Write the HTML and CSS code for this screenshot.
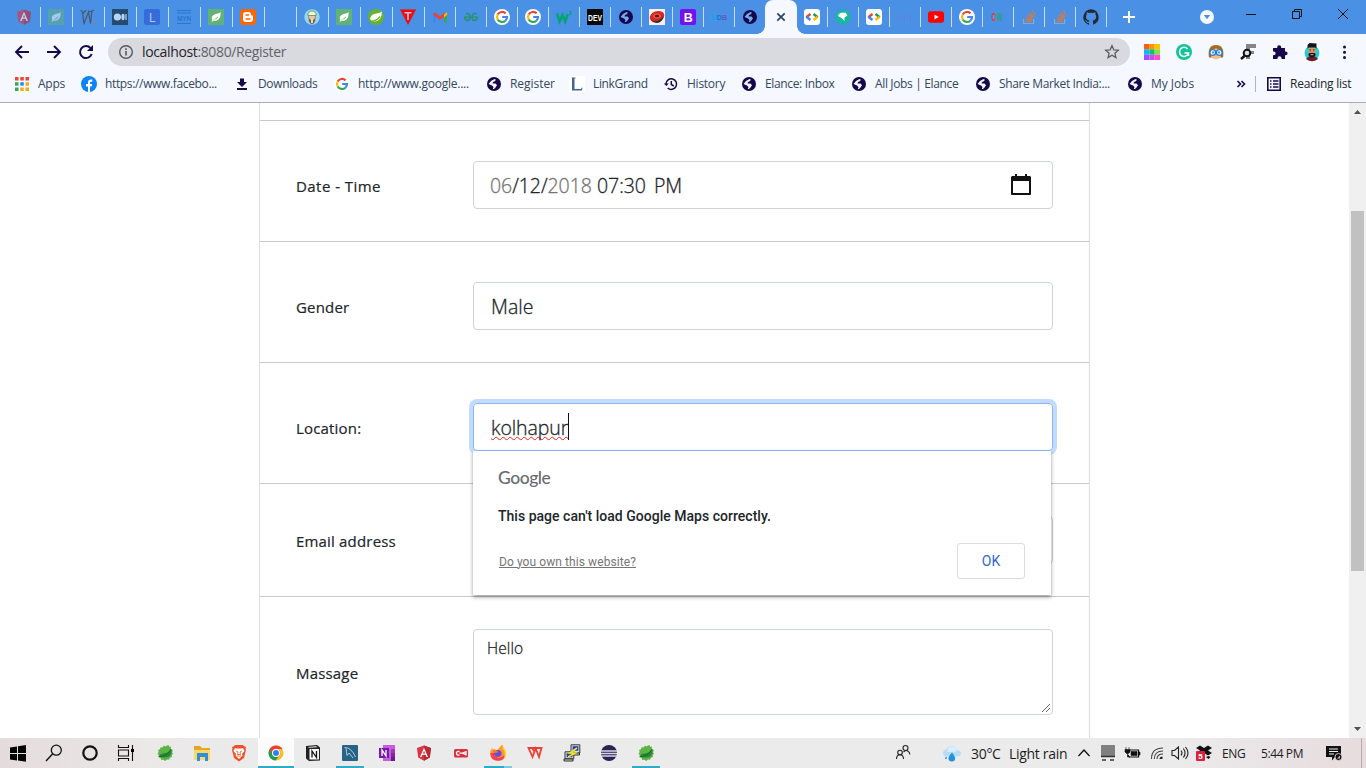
FILE: index.html
```html
<!DOCTYPE html>
<html lang="en">
<head>
<meta charset="utf-8">
<title>Register</title>
<link rel="stylesheet" href="styles.css">
</head>
<body>
<svg class="defs" aria-hidden="true">
  <symbol id="globe" viewBox="0 0 16 16"><circle cx="8" cy="8" r="7" fill="#17084b"/><path d="M2.600 8 5 5 8.500 3 10 3.800 8.800 5.300 7 6 6.500 7.500h3l1.500 1.800L9.500 11.500 8 13H6.800l.7-2L6 9.500z" fill="#f3f6fd"/></symbol>
  <symbol id="globe-tab" viewBox="0 0 16 16"><circle cx="8" cy="8" r="7" fill="#17084b"/><path d="M2.600 8 5 5 8.500 3 10 3.800 8.800 5.300 7 6 6.500 7.500h3l1.500 1.800L9.500 11.500 8 13H6.800l.7-2L6 9.500z" fill="#76adf0"/></symbol>
  <symbol id="google" viewBox="0 0 16 16"><circle cx="8" cy="8" r="8" fill="#fff"/><g fill="none" stroke-width="2.200"><path d="M11.600 4.400A5 5 0 0 0 3.700 5.500" stroke="#ea4335"/><path d="M3.700 5.500a5 5 0 0 0 0 5" stroke="#fbbc05"/><path d="M3.700 10.500a5 5 0 0 0 7.700 1.200" stroke="#34a853"/><path d="M11.400 11.700A5 5 0 0 0 13 8H8.200" stroke="#4285f4"/></g></symbol>
  <symbol id="leaf" viewBox="0 0 16 16"><path d="M0 0h16v16H0z" fill="#60b277"/><path d="M12.600 3C11 5 4.500 4.600 3.800 8.400c-.2 1 .2 1.900.7 2.400l-1 1.400.8.500 1.200-1.300c5 1.200 7.500-2.400 7.100-8.400zM5.500 10.500c2.500-1 4-2.300 5-4-.6 2.800-2.300 4.200-5 4z" fill="#fff"/></symbol>
  <symbol id="angular" viewBox="0 0 16 16"><path d="M8 .5 15 3l-1.200 9.500L8 15.700 2.200 12.500 1 3z" fill="#dd3340"/><path d="M8 .5 15 3l-1.200 9.500L8 15.700z" fill="#b82a39"/><path d="M8 2.700 4 12h1.500l.9-2.200h3.200l.9 2.200H12zm0 3.100 1.100 2.700H6.900z" fill="#fff"/></symbol>
  <symbol id="codelab" viewBox="0 0 16 16"><rect width="16" height="16" rx="3" fill="#fff"/><g fill="none" stroke-width="2.400"><path d="M6.500 5 2.300 8.200" stroke="#ea4335"/><path d="M2.300 7.800 6.500 11" stroke="#4285f4"/><path d="M9.500 5l4.200 3.200" stroke="#0f9d58"/><path d="M13.700 7.800 9.500 11" stroke="#fbbc05"/></g></symbol>
  <symbol id="stack" viewBox="0 0 16 16"><g fill="none" stroke="#93a6bb" stroke-width="1.200"><path d="M2.600 10v4.500h10V10"/></g><g stroke="#df7936" stroke-width="1.200"><path d="M4.700 12.500h6M4.800 10.400l6 .8M5.300 8l5.700 2M6.700 5.500l5 3.500M8.700 3.300l3.800 4.700M11.500 1.300 14 6.500"/></g></symbol>
  <symbol id="spring-leaf" viewBox="0 0 16 16"><circle cx="8" cy="8" r="8" fill="#67b32e"/><path d="M13.800 2.500C12 5 4 3.500 2.400 8.500c-.4 1.500 0 2.300.8 3 4.800 2.500 10.800-.2 10.600-9z" fill="#fff"/><path d="M3 12.300c4-.3 7-2 9-5" fill="none" stroke="#67b32e" stroke-width="1.200"/></symbol>
  <symbol id="sts" viewBox="0 0 18 18"><path d="m11 1.500 1.500-.5 1 2 1.500-.5-.3 2 2.300 2-1 1.500 1 2-1.300 1 .3 2-2 .7-1 2-2-.2-1.700 1.500-2-1.200-2 .3-.7-2-2-.8.3-2-1.400-1.500L2.700 8 2 6l2-.8.5-2 2 .3 1.500-2 1.500 1z" fill="#5db445"/><path d="M3 12C5 8 12 11 15 5c1.500 5-1 8-5 8.500-3 .3-5 0-7-1.500z" fill="#28873a"/><path d="M2.500 12.500C6 13 12 11 15 5" fill="none" stroke="#125b26" stroke-width=".7"/></symbol>
</svg>

<header class="browser">
  <div class="tabstrip">
    <div class="tab first"><svg class="fade" viewBox="0 0 16 16"><use href="#angular"/></svg></div>
    <div class="tab"><svg class="fade teal" viewBox="0 0 16 16"><use href="#leaf"/></svg></div>
    <div class="tab"><svg viewBox="0 0 16 16"><g fill="none" stroke="#48576e" stroke-width="1.200"><path d="M.5 1.500C4 1 2.500 10 4 14.500L8.500 3l2 11.500L12 1.500M2 5 6 1.200M8.500 3 14 1.200"/></g><circle cx="14.500" cy="13" r="1.200" fill="#8d8583"/></svg></div>
    <div class="tab"><svg viewBox="0 0 16 16"><path d="M0 0h16v16H0z" fill="#254a70"/><circle cx="5.400" cy="8" r="3.600" fill="#b7d4f7"/><ellipse cx="11" cy="8" rx="1.600" ry="3.300" fill="#b7d4f7"/><path d="M14 5v6" stroke="#b7d4f7" stroke-width="1.200"/></svg></div>
    <div class="tab"><svg viewBox="0 0 16 16"><rect width="16" height="16" rx="2" fill="#376bd9"/><text x="5" y="12.500" class="glyph l">L</text></svg></div>
    <div class="tab"><svg viewBox="0 0 16 16"><path d="M1 1.500h14M1 4h14M1 14.500h14" stroke="#2577d7"/><text x="1" y="11.500" class="glyph myn" textLength="14" lengthAdjust="spacingAndGlyphs">MYN</text></svg></div>
    <div class="tab"><svg viewBox="0 0 16 16"><use href="#leaf"/></svg></div>
    <div class="tab"><svg viewBox="0 0 16 16"><rect width="16" height="16" rx="3" fill="#ff6600"/><path d="M6 3h2.500Q11 3 11 5.500q0 1 1 1 1 0 1 1V10q0 3-3 3H6q-3 0-3-3V6q0-3 3-3z" fill="#fff"/><path d="M6 6h2.500M6 10h4" stroke="#ff6600" stroke-width="1.400" stroke-linecap="round"/></svg></div>
    <div class="tab"></div>
    <div class="tab"><svg viewBox="0 0 16 16"><circle cx="8" cy="8" r="7.700" fill="#96d8ee"/><path d="M4.500 7q0 8 3.500 8t3.500-8z" fill="#77553b"/><circle cx="8" cy="8" r="3" fill="#e7c9a5"/><path d="M3.800 6.500Q4 2 8 2t4.200 4.500z" fill="#f6f5d8" stroke="#5b8b4d" stroke-width=".8"/><path d="M7 10h2v4H7z" fill="#e8dcc4"/></svg></div>
    <div class="tab"><svg viewBox="0 0 16 16"><use href="#leaf"/></svg></div>
    <div class="tab"><svg viewBox="0 0 16 16"><use href="#spring-leaf"/></svg></div>
    <div class="tab"><svg viewBox="0 0 16 16"><path d="M0 .5h16L8 16z" fill="#fb0505"/><path d="M4.500 3h7v1.500H8.800V11H7.200V4.500H4.500z" fill="#b8c8e8"/></svg></div>
    <div class="tab narrow"><svg viewBox="0 0 16 16"><path d="M1 4v9.500h3V6z" fill="#4285f4"/><path d="M12 6v7.500h3V4z" fill="#34a853"/><path d="m2 4.500 6 4.700 6-4.700" fill="none" stroke="#ea4335" stroke-width="3"/><path d="M12 5.500 15 3v3l-3 2.500z" fill="#fbbc05"/></svg></div>
    <div class="tab narrow"><svg viewBox="0 0 16 16"><g fill="none" stroke="#259269" stroke-width="1.300"><path d="M2.500 4.800Q7 3.500 7 8.200 7 11.500 4.500 11.500T1.500 8.200h13q-.5 3.300-3 3.300T9 8.200q0-4.700 4.500-3.400"/></g></svg></div>
    <div class="tab narrow"><svg viewBox="0 0 16 16"><use href="#google"/></svg></div>
    <div class="tab narrow"><svg viewBox="0 0 16 16"><use href="#google"/></svg></div>
    <div class="tab narrow"><svg viewBox="0 0 16 16"><path d="m1 4.500 2.600 8L6.500 6l2.700 6.500L11.800 5" fill="none" stroke="#05a474" stroke-width="2.600"/><path d="M13 2.500h2L14 4q1.600 0 1.200 1.300-.8 1-2.200.2" fill="none" stroke="#05a474"/></svg></div>
    <div class="tab narrow"><svg viewBox="0 0 16 16"><path d="M0 0h16v16H0z" fill="#080808"/><text x="1" y="11.800" class="glyph dev" textLength="14" lengthAdjust="spacingAndGlyphs">DEV</text></svg></div>
    <div class="tab narrow"><svg viewBox="0 0 16 16"><use href="#globe-tab"/></svg></div>
    <div class="tab narrow"><svg viewBox="0 0 16 16"><path d="M0 0h16v16H0z" fill="#f7f1ef"/><ellipse cx="8" cy="7.500" rx="7.500" ry="5.300" fill="#d62820" transform="rotate(-20 8 7.500)"/><path d="M2 11q6 4 13-4-2 7-7 7-4 0-6-3" fill="#37282c"/><ellipse cx="8" cy="7" rx="4" ry="2.500" fill="#e8524c"/><ellipse cx="8" cy="7" rx="2.200" ry="1.300" fill="#442226"/></svg></div>
    <div class="tab narrow"><svg viewBox="0 0 16 16"><rect width="16" height="16" rx="2" fill="#7611ee"/><text x="3.700" y="12.700" class="glyph b">B</text></svg></div>
    <div class="tab narrow"><svg viewBox="0 0 16 16"><text x="0" y="10.500" class="glyph mdb"><tspan fill="#18a7ed">M</tspan><tspan fill="#2172c8">D</tspan><tspan fill="#6954c5">B</tspan></text></svg></div>
    <div class="tab narrow first"><svg viewBox="0 0 16 16"><use href="#globe-tab"/></svg></div>
    <div class="tab narrow active"><svg viewBox="0 0 16 16"><path d="m4.300 4.300 7.400 7.400m0-7.400-7.400 7.400" stroke="#2b4560" stroke-width="1.700"/></svg></div>
    <div class="tab narrow first"><svg viewBox="0 0 16 16"><use href="#codelab"/></svg></div>
    <div class="tab narrow"><svg viewBox="0 0 16 16"><path d="m8 0 7.200 4v8L8 16 .8 12V4z" fill="#17b89e"/><path d="M3 7q1-3.500 5-3.500l1 .5 1.500-.5L12.500 6.500 9.500 8.500 9.500 12 6.500 9z" fill="#fff"/></svg></div>
    <div class="tab narrow"><svg viewBox="0 0 16 16"><use href="#codelab"/></svg></div>
    <div class="tab narrow"><svg viewBox="0 0 16 16"><text x="0" y="11" class="glyph kpi" textLength="15">KPI</text></svg></div>
    <div class="tab narrow"><svg viewBox="0 0 16 16"><rect y="2.300" width="16" height="11.500" rx="2.700" fill="#f00"/><path d="m6.500 5.500 4.200 2.500-4.200 2.500z" fill="#fff"/></svg></div>
    <div class="tab narrow"><svg viewBox="0 0 16 16"><use href="#google"/></svg></div>
    <div class="tab narrow"><svg viewBox="0 0 16 16"><text x="0" y="8.700" class="glyph cw" transform="translate(1.500 0) scale(.85 1.400)"><tspan fill="#e0413c">C</tspan><tspan fill="#26a277">W</tspan></text></svg></div>
    <div class="tab narrow"><svg viewBox="0 0 16 16"><use href="#stack"/></svg></div>
    <div class="tab narrow"><svg viewBox="0 0 16 16"><use href="#stack"/></svg></div>
    <div class="tab narrow"><svg viewBox="0 0 16 16"><path d="M8 .2a8 8 0 0 0-2.500 15.500c.4.100.5-.2.500-.4v-1.500c-2.200.5-2.700-1-2.700-1-.4-.9-.9-1.200-.9-1.200-.7-.5.100-.5.100-.5.800 0 1.200.8 1.200.8.700 1.200 1.900.9 2.400.7 0-.5.300-.9.500-1.100-1.800-.2-3.600-.9-3.600-4 0-.9.300-1.600.8-2.100-.1-.3-.4-1.100.1-2.200 0 0 .7-.2 2.200.8a7 7 0 0 1 4 0c1.500-1 2.200-.8 2.200-.8.400 1.100.2 1.900.1 2.200.5.500.8 1.200.8 2.100 0 3.100-1.900 3.800-3.700 4 .3.200.6.700.6 1.500v2.200c0 .3.100.5.500.4A8 8 0 0 0 8 .2z" fill="#24292f"/></svg></div>
    <div class="newtab"><svg viewBox="0 0 16 16"><path d="M8 2v12M2 8h12" stroke="#fff" stroke-width="2"/></svg></div>
    <div class="window-controls">
      <svg class="drop" viewBox="0 0 14 14"><circle cx="7" cy="7" r="7" fill="#f5f8fe"/><path d="M3.800 5h6.400L7 9.200z" fill="#4a90e5"/></svg>
      <svg viewBox="0 0 12 12"><path d="M1 6.500h10" stroke="#111"/></svg>
      <svg viewBox="0 0 12 12"><path d="M1.500 3.500h7v7h-7zM3.500 3V1.500h7v7H9" fill="none" stroke="#111"/></svg>
      <svg viewBox="0 0 12 12"><path d="m1 1 10 10M11 1 1 11" stroke="#111"/></svg>
    </div>
  </div>

  <div class="toolbar">
    <nav class="nav">
      <svg viewBox="0 0 16 16"><path d="M15 8H2.500M8 2 2 8l6 6" fill="none" stroke="#17084b" stroke-width="1.900"/></svg>
      <svg viewBox="0 0 16 16"><path d="M1 8h12.500M8 2l6 6-6 6" fill="none" stroke="#17084b" stroke-width="1.900"/></svg>
      <svg viewBox="0 0 16 16"><path d="M13.700 10A6 6 0 1 1 12.500 4" fill="none" stroke="#17084b" stroke-width="2"/><path d="M15 1v6H9z" fill="#17084b"/></svg>
    </nav>
    <div class="address">
      <svg viewBox="0 0 16 16"><circle cx="8" cy="8" r="6.300" fill="none" stroke="#55585d" stroke-width="1.400"/><path d="M8 7v4.500M8 4.300v1.600" stroke="#55585d" stroke-width="1.600"/></svg>
      <span class="url"><b>localhost</b>:8080/Register</span>
      <svg class="star" viewBox="0 0 16 16"><path d="m8 1.700 1.800 4.100 4.500.4-3.400 3 1 4.400L8 11.200l-3.900 2.400 1-4.400-3.400-3 4.500-.4z" fill="none" stroke="#5a5d62" stroke-width="1.300"/></svg>
    </div>
    <div class="extensions">
      <svg viewBox="0 0 16 16"><path d="M0 0h5.400v5.300H0z" fill="#ff5b12"/><path d="M5.400 0h5.300v5.300H5.400z" fill="#ff9500"/><path d="M10.700 0H16v5.300h-5.300z" fill="#ffc500"/><path d="M0 5.300h5.400v5.400H0z" fill="#13b5f4"/><path d="M5.400 5.300h5.300v5.400H5.400z" fill="#09c46b"/><path d="M10.700 5.300H16v5.400h-5.300z" fill="#8ce03f"/><path d="M0 10.700h5.400V16H0z" fill="#9650ff"/><path d="M5.400 10.700h5.300V16H5.400z" fill="#c94df0"/><path d="M10.700 10.700H16V16h-5.300z" fill="#fc4fcd"/></svg>
      <svg viewBox="0 0 16 16"><circle cx="8" cy="8" r="8" fill="#15c39a"/><path d="M11.500 5A4.500 4.500 0 1 0 12 10M8.500 9h4v3" fill="none" stroke="#fff" stroke-width="1.500"/></svg>
      <svg viewBox="0 0 16 16"><path d="M1 13.500Q-1 1 8 1t7 12.500z" fill="#a86922"/><path d="M3 6q5-3 10 0v6q-1 3-5 3.500Q4 15 3 12z" fill="#f6bd93"/><circle cx="4.700" cy="8.500" r="2.900" fill="#fff" stroke="#2379ce" stroke-width="1.300"/><circle cx="11.300" cy="8.500" r="2.900" fill="#fff" stroke="#2379ce" stroke-width="1.300"/><circle cx="5" cy="8.500" r="1.200" fill="#4b9ce8"/><circle cx="11" cy="8.500" r="1.200" fill="#4b9ce8"/></svg>
      <svg viewBox="0 0 16 16"><path d="M6 0h10v4h-6v3h4v3h-4v5H6z" fill="#858585"/><circle cx="7" cy="9" r="3.300" fill="#dce1e7" stroke="#111" stroke-width="2"/><path d="m4.500 12-3.500 3" stroke="#111" stroke-width="2.500"/></svg>
      <svg viewBox="0 0 16 16"><path d="M1 4h4.200v-.8a2 2 0 0 1 4 0V4H13v3.400h.7a1.900 1.900 0 0 1 0 3.800H13V15H9.500v-.8a2 2 0 0 0-4 0v.8H1v-3.800h.7a1.900 1.900 0 0 0 0-3.800H1z" fill="#17084b"/></svg>
      <svg viewBox="0 0 20 20"><circle cx="10" cy="10" r="9.500" fill="#fff"/><circle cx="10" cy="11" r="7.500" fill="#1ed0dc"/><path d="M4 17q2-3 6-3t6 3q-6 4.500-12 0" fill="#681d29"/><path d="M6.500 5.500h7V12q-3.500 5-7 0z" fill="#d99667"/><path d="M5.500 7V3l2-2 7 .5V7l-1-1.500h-7zM6.500 11.500q3.500-1.500 7 0v2q-3.500 4-7 0z" fill="#181316"/><path d="M8.500 12.700h3" stroke="#e6ad83"/><path d="M7.500 8h1.500M11 8h1.500" stroke="#181316"/></svg>
      <svg viewBox="0 0 16 16"><circle cx="8.500" cy="3" r="1.500" fill="#17084b"/><circle cx="8.500" cy="8.200" r="1.500" fill="#17084b"/><circle cx="8.500" cy="13.400" r="1.500" fill="#17084b"/></svg>
    </div>
  </div>

  <nav class="bookmarks">
    <a><svg viewBox="0 0 16 16"><path d="M1 1h3.500v3.500H1zM6.300 1h3.500v3.500H6.300zM11.500 1H15v3.500h-3.500z" fill="#ee4335"/><path d="M1 6.200h3.500v3.500H1z" fill="#34a853"/><path d="M6.300 6.200h3.500v3.500H6.300z" fill="#258cf4"/><path d="M11.500 6.200H15v3.500h-3.500zM6.300 11.500h3.500V15H6.300zM11.500 11.500H15V15h-3.500z" fill="#f5ad16"/><path d="M1 11.500h3.500V15H1z" fill="#34a853"/></svg><span>Apps</span></a>
    <a><svg viewBox="0 0 16 16"><circle cx="8" cy="8" r="8" fill="#0c84f4"/><path d="M7 16v-5.500H5V8h2V6.500Q7 3.400 10 3.500l1.300.1v2.200H10q-1 0-1 1V8h2.200l-.5 2.500H9V16z" fill="#fff"/></svg><span class="tight">https://www.facebo...</span></a>
    <a><svg viewBox="0 0 16 16"><path d="M6 2.500h4V6h3l-5 5-5-5h3zM3 12h10v2H3z" fill="#17084b"/></svg><span class="tight">Downloads</span></a>
    <a><svg viewBox="0 0 16 16"><use href="#google"/></svg><span>http://www.google....</span></a>
    <a><svg viewBox="0 0 16 16"><use href="#globe"/></svg><span class="loose">Register</span></a>
    <a><svg viewBox="0 0 16 16"><path d="M0 0h16v16H0z" fill="#fff"/><path d="M2.500 1.500h4v1H5.500V13H12l1-1.500h.5l-.5 3H3V2.500z" fill="#466597"/></svg><span class="tight">LinkGrand</span></a>
    <a><svg viewBox="0 0 16 16"><path d="M3 8a5.300 5.300 0 1 1 1.700 4M8.300 5v3.500l2.500 1.500" fill="none" stroke="#17084b" stroke-width="1.500"/><path d="M.8 7.500h5L3.300 10z" fill="#17084b"/></svg><span>History</span></a>
    <a><svg viewBox="0 0 16 16"><use href="#globe"/></svg><span class="tight">Elance: Inbox</span></a>
    <a><svg viewBox="0 0 16 16"><use href="#globe"/></svg><span class="tight">All Jobs | Elance</span></a>
    <a><svg viewBox="0 0 16 16"><use href="#globe"/></svg><span class="tight">Share Market India:...</span></a>
    <a><svg viewBox="0 0 16 16"><use href="#globe"/></svg><span class="loose">My Jobs</span></a>
    <svg class="more" viewBox="0 0 10 10"><path d="m1.500 2 3 3-3 3M5.500 2l3 3-3 3" fill="none" stroke="#17084b" stroke-width="1.600"/></svg>
    <a class="reading"><svg viewBox="0 0 16 16"><path d="M1.800 1.800h12.400v12.400H1.800z" fill="none" stroke="#17084b" stroke-width="1.600"/><path d="M4 5h1.500M7 5h5.500M4 8h1.500M7 8h5.500M4 11h1.500M7 11h5.500" stroke="#17084b" stroke-width="1.500"/></svg><span>Reading list</span></a>
  </nav>
</header>

<main class="viewport">
  <form class="form">
    <div class="row stub"></div>
    <div class="row"><label class="wide">Date - Time</label><div class="field date"><span><i>06</i>/12/<i>2018</i></span><span>07:30</span><span>PM</span>
      <svg viewBox="0 0 22 24"><path d="M2 5v16h18V5" fill="none" stroke="#111" stroke-width="2" stroke-linejoin="round"/><path d="M2 3h18l1 1v4H1V4z" fill="#111"/><path d="M6 1v4M16 1v4" stroke="#111" stroke-width="2"/></svg></div></div>
    <div class="row"><label>Gender</label><div class="field">Male</div></div>
    <div class="row"><label>Location:</label><div class="field focused"><span class="misspelt">kolhapur</span><span class="caret"></span>
      <section class="dialog">
        <div class="brand">Google</div>
        <p>This page can't load Google Maps correctly.</p>
        <footer><a>Do you own this website?</a><span class="ok">OK</span></footer>
      </section></div></div>
    <div class="row email"><label>Email address</label><div class="field"></div></div>
    <div class="row message"><label>Massage</label><div class="field area"><span>Hello</span><svg viewBox="0 0 10 10"><path d="m1 9 8-8M5 9l4-4" stroke="#555" stroke-width=".9"/></svg></div></div>
  </form>
  <div class="scrollbar">
    <svg viewBox="0 0 17 17"><path d="m5 11 3.500-4 3.500 4z" fill="#505050"/></svg>
    <div class="thumb"></div>
    <svg viewBox="0 0 17 17"><path d="m5 6 3.500 4L12 6z" fill="#505050"/></svg>
  </div>
</main>

<footer class="taskbar">
  <div class="system">
    <svg viewBox="0 0 18 18"><path d="m1 3.400 7-1V9H1zM9 2.200 17 1v8H9zM1 10h7v6.500l-7-1zM9 10h8v7.800l-8-1.200z"/></svg>
    <svg viewBox="0 0 18 18"><circle cx="11.300" cy="6.200" r="5" fill="none" stroke="#111" stroke-width="1.300"/><path d="m7.500 10-6.500 7" stroke="#111" stroke-width="1.400"/></svg>
    <svg viewBox="0 0 18 18"><circle cx="9" cy="9" r="6.700" fill="none" stroke="#111" stroke-width="2.200"/></svg>
    <svg viewBox="0 0 18 18"><path d="M1.500 1v2.500h10V1M1.500 6h10v6h-10zM1.500 17v-2.500h10V17M15.500 1v16" fill="none" stroke="#111" stroke-width="1.100"/><path d="M14 5h3v3h-3z"/></svg>
  </div>
  <div class="apps">
    <div><svg viewBox="0 0 18 18"><use href="#sts"/></svg></div>
    <div><svg viewBox="0 0 18 18"><path d="M1 2h6l2 2h8v12H1z" fill="#e6a622"/><path d="M1 6h16v10H1z" fill="#ffd968"/><path d="M4 9h11v8h-3v-4H7v4H4z" fill="#2f8fdf"/></svg></div>
    <div><svg viewBox="0 0 18 18"><path d="M5 1h8l1.500 1.500L16 3l-.5 2 .5 1-2 8-5 3.500L4 14 2 6l.5-1L2 3l1.500-.5z" fill="#f35028"/><path d="m5 4 2 .5h4l2-.5 1.500 3-2.500 3 .5 1.500L9 15l-3.500-3.500L6 10 3.500 7z" fill="#fff"/><path d="m6 7 2 1-.5 2.500h3L10 8l2-1M7 12h4" fill="none" stroke="#f35028" stroke-width=".8"/></svg></div>
    <div class="current"><svg viewBox="0 0 18 18"><circle cx="9" cy="9" r="7.500" fill="#f9be27"/><path d="M2.500 5.300A7.500 7.500 0 0 1 15.500 5H9a4 4 0 0 0-3.500 6z" fill="#e64235"/><path d="M2.500 5.300a7.500 7.500 0 0 0 6.200 11.200l3.800-5.500Q10 14 6 11z" fill="#239a55"/><circle cx="9" cy="9" r="3.900" fill="#fff"/><circle cx="9" cy="9" r="3" fill="#367eed"/></svg></div>
    <div><svg viewBox="0 0 18 18"><path d="m2 2 11-1 3 2.500v13l-11 .5-3-2.500z" fill="#222"/><path d="M5.500 5h9.500v10.500H5.500z" fill="#f8f8f8"/><path d="M3.500 3 12 2.300l1.500 1-8 .4z" fill="#eee"/><path d="M8 13.500V7l4.500 6.500V7" fill="none" stroke="#111" stroke-width="1.300"/></svg></div>
    <div class="open"><svg viewBox="0 0 18 18"><rect x="1" y="1" width="16" height="16" rx="1" fill="#276287"/><path d="M3.500 3.500q7 0 11 9.500M5 4.500l1 7 2-2.500 4 5" fill="none" stroke="#d1e2ed" stroke-width=".8"/></svg></div>
    <div><svg viewBox="0 0 18 18"><path d="M5 1h12v16H5z" fill="#c75cdc"/><path d="M13 5h4v4h-4z" fill="#a039b8"/><path d="M13 9h4v4h-4z" fill="#8128a0"/><path d="M13 13h4v4h-4z" fill="#691d86"/><path d="M1 4h10v10H1z" fill="#7719aa"/><path d="M4 12V6l4 6V6" fill="none" stroke="#fff" stroke-width="1.300"/></svg></div>
    <div><svg viewBox="-1 -1 18 18"><use href="#angular" width="16" height="16"/></svg></div>
    <div><svg viewBox="0 0 18 18"><rect x="2" y="5" width="14" height="8.500" rx="1.500" fill="#d93140"/><path d="M7.500 7.500Q4.500 6.800 4.500 9.300q0 2.400 3 1.700M7.500 9.200h3l3.500-1.500v3l-3.500-1.500" fill="none" stroke="#fff" stroke-width="1.300"/></svg></div>
    <div class="open multi"><svg viewBox="0 0 18 18"><path d="M3 3.500q-1 2 0 3.500l2-2 3 1 3-3q1-2.500 3-2v3q3 3 3 6a8 7 0 0 1-16 0q0-4.500 2-6.500z" fill="#ff9a22"/><path d="M1.500 9q0 8 8 7.500 6 0 6.500-6-4 4-7.500 3T5 9z" fill="#f93d5b"/><path d="M6 7.500q4-3 6.500.5v3q-3 3.500-6.500 1-2-2.500 0-4.500" fill="#6a4bda"/><path d="m3 4 2 2.500 4.500 1q-1 1.500-3.500 1.500L4 8.500z" fill="#ff751f"/><path d="m13 1 1 4q3 4 .5 9Q18 11 17 7z" fill="#ffd332"/></svg></div>
    <div><svg viewBox="0 0 18 18"><path d="M2.500 4h13l-2.500 9-3.300-8.500L6.500 13zM6.500 4.500l2.500 4" fill="none" stroke="#ee4031" stroke-width="1.800"/></svg></div>
    <div><svg viewBox="0 0 18 18"><path d="M9 1.500h7v6H9zM3 8.500h7v5.500H3z" fill="#1738aa" stroke="#ddd" stroke-width="1.300"/><path d="M8 .8h8.800v8.200H8zM2 7.800h8.800v7H2z" fill="none" stroke="#222" stroke-width=".9"/><path d="M8 9h8.500v2H8zM1 15h9v2H1z" fill="#ccc" stroke="#222" stroke-width=".9"/><path d="m14 4-7 5h5l-7 4" fill="none" stroke="#f2e82e" stroke-width="1.700"/></svg></div>
    <div><svg viewBox="0 0 18 18"><circle cx="9" cy="9" r="8" fill="#2c2255"/><path d="M1 7h16M1 9.500h16M1 12h16" stroke="#d8d6e1" stroke-width="1.300"/></svg></div>
    <div class="open"><svg viewBox="0 0 18 18"><use href="#sts"/></svg></div>
  </div>
  <div class="tray">
    <svg class="people" viewBox="0 0 16 16"><g fill="none" stroke="#222" stroke-width="1.100"><circle cx="10.500" cy="4" r="2.500"/><circle cx="5" cy="8.500" r="2.300"/><path d="M1.500 15q0-4.200 3.500-4.200T8.500 15M8.500 8q3-2.500 4.500-.7 1.800 1 1.800 3.200"/></g></svg>
    <svg class="weather" viewBox="0 0 20 18"><path d="M5 12.500Q1 12.500 1 9q0-3 3.500-3.500Q6 1.500 10 2q3.500 0 4.500 4Q19 6 19 9.500q0 3-4 3z" fill="#b8dcf6"/><path d="M5.500 8Q5 2.500 9.500 2.500t5 5z" fill="#d8effd"/><path d="M10 8.500q-3.500 4-3.500 5.700a3.300 3.300 0 0 0 6.600 0q0-1.700-3.100-5.700z" fill="#2391df"/><path d="m4.500 13-1 2" stroke="#2491df" stroke-width="1.400"/></svg>
    <span class="temp">30°C</span><span class="rain">Light rain</span>
    <svg class="up" viewBox="0 0 16 16"><path d="m2.500 11 5.500-6 5.500 6" fill="none" stroke="#111" stroke-width="1.300"/></svg>
    <svg class="device" viewBox="0 0 16 16"><path d="M1 0h14v11H1z" fill="#808080"/><path d="M1 11.500h14M2 15h4m4 0h4" stroke="#333" stroke-width="1.500"/></svg>
    <svg class="battery" viewBox="0 0 16 16"><path d="M6 5h8.500v7H5" fill="none" stroke="#111" stroke-width="1.200"/><path d="M7 6.500h6v4H7zM14.500 7H16v3h-1.500zM1 4.500h5v2.500L4.500 8.500h-2L1 7zM2 2v3M5 2v3M3.500 8.500V12H6" fill="#111" stroke="#111" stroke-width=".6"/></svg>
    <svg class="wifi" viewBox="0 0 16 16"><g fill="none" stroke="#444" stroke-width="1.100"><path d="M2.500 14Q2.500 3 14 3M5.300 14q0-8 8.700-8M8 14q0-5 6-5"/></g><path d="M10.500 14q0-2.500 3-2.500V14z" fill="#222"/></svg>
    <svg class="sound" viewBox="0 0 18 16"><path d="M1 5.500h2.500l4-3.500v12l-4-3.500H1zM10 5.500q2 2.500 0 5M12.300 3.500q3.500 4.500 0 9M14.500 2q5 6 0 12" fill="none" stroke="#222" stroke-width="1.100"/></svg>
    <svg class="dropbox" viewBox="0 0 16 16"><path d="m0 3 4-2.500L8 3l4-2.500L16 3l-4 2.500L16 8l-4 2.500L8 8l-4 2.500L0 8l4-2.500zM10 12l2.500-1 2 1-2 2z" fill="#111"/><rect x="0" y="6" width="9" height="10" rx="1" fill="#dd2039"/><text x="2.300" y="14" class="glyph five">5</text></svg>
    <span class="lang">ENG</span><span class="clock">5:44 PM</span>
    <svg class="note" viewBox="0 0 16 16"><path d="M0 1h15v11H9l-3 3.500V12H0z" fill="#111"/><path d="M3 4h9M3 6.500h9M3 9h5" stroke="#eee"/><circle cx="12.500" cy="12" r="3.500" fill="#111" stroke="#ece5e7" stroke-width=".8"/><path d="m11 13.500 3-3v3z" fill="#bbb"/></svg>
    <div class="peek"></div>
  </div>
</footer>
</body>
</html>
```
FILE: styles.css
```css
* { box-sizing: border-box; }
body {
  margin: 0;
  width: 1366px;
  height: 768px;
  overflow: hidden;
  display: flex;
  flex-direction: column;
  font-family: "Open Sans", "Noto Sans", sans-serif;
  color: #212529;
  background: #fff;
}
svg { display: block; flex: none; overflow: visible; }
.defs { position: absolute; width: 0; height: 0; overflow: hidden; }
.glyph { font-family: "Liberation Sans", sans-serif; font-weight: 700; }
.l { font-size: 12px; font-weight: 400; fill: #a9cbfa; }
.myn { font-size: 8px; fill: #2577d7; }
.dev { font-size: 9px; fill: #fff; }
.b { font-size: 12.5px; fill: #fff; }
.mdb { font-size: 7px; }
.kpi { font-size: 8px; font-weight: 400; fill: #667fe0; }
.cw { font-size: 8px; letter-spacing: -.5px; }
.five { font-size: 8px; fill: #fff; }

/* Browser frame */
.browser {
  flex: none;
  height: 103px;
  background: #f5f8fe;
  border-bottom: 1px solid #a9acb1;
}
.tabstrip { display: flex; height: 34px; padding-left: 8px; background: #4a90e5; }
.tab {
  flex: none;
  width: 32px;
  display: flex;
  align-items: center;
  justify-content: center;
  background: linear-gradient(#c5dcf7, #c5dcf7) 0 7px / 1px 20px no-repeat;
}
.tab svg { width: 16px; height: 16px; }
.tab .fade { opacity: .62; }
.tab .teal { opacity: .5; }
.tab.narrow { width: 31px; }
.tab.first:first-child, .active + .tab.first { background: none; }
.tab.active { position: relative; width: 32px; margin-right: -1px; background: #f5f8fe; border-radius: 8px 8px 0 0; }
.active::before, .active::after {
  content: "";
  position: absolute;
  bottom: 0;
  width: 8px;
  height: 8px;
}
.active::before { left: -8px; background: radial-gradient(circle at 0 0, transparent 7.5px, #f5f8fe 8px); }
.active::after { right: -8px; background: radial-gradient(circle at 100% 0, transparent 7.5px, #f5f8fe 8px); }
.newtab {
  width: 45px;
  display: flex;
  align-items: center;
  justify-content: center;
  background: linear-gradient(#c5dcf7, #c5dcf7) 0 7px / 1px 20px no-repeat;
}
.newtab svg { width: 16px; height: 16px; }
.window-controls { display: flex; flex: 1; align-items: flex-start; justify-content: flex-end; padding: 8px 17px 0 0; gap: 34px; }
.window-controls svg { width: 12px; height: 12px; }
.window-controls .drop { width: 14px; height: 14px; margin: 2px -3px 0 0; }

.toolbar { display: flex; height: 36px; align-items: center; }
.nav { display: flex; width: 108px; padding-left: 14px; gap: 16px; }
.nav svg { width: 16px; height: 16px; }
.address {
  display: flex;
  align-items: center;
  width: 1022px;
  height: 28px;
  padding: 0 10px;
  border-radius: 14px;
  background: #d9dae0;
}
.address svg { width: 16px; height: 16px; }
.url { margin: -1px 0 0 8px; flex: 1; font-size: 14px; letter-spacing: -.36px; color: #5f6368; }
.url b { font-weight: 400; color: #1f2328; }
.extensions { display: flex; align-items: center; padding-left: 14px; gap: 16px; }
.extensions svg { width: 16px; height: 16px; }
.extensions svg:nth-child(6) { width: 20px; height: 20px; margin: 0 -2px; }

.bookmarks {
  display: grid;
  grid-template-columns: 67px 153px 100px 152px 83px 94px 78px 110px 124px 152px 108px 20px 111px;
  align-items: center;
  height: 28px;
  padding-left: 14px;
  font-size: 12px;
  letter-spacing: -.25px;
  color: #33475d;
}
.bookmarks a { display: flex; align-items: center; gap: 8px; height: 16px; white-space: nowrap; }
.bookmarks a svg { width: 16px; height: 16px; }
.bookmarks span { margin-top: -1px; }
.bookmarks .tight { letter-spacing: -.35px; }
.bookmarks .loose { letter-spacing: -.05px; }
.more { width: 10px; height: 10px; margin-left: 1px; }
.reading { border-left: 1px solid #a9b3c9; padding-left: 10px; color: #22252b; }

/* Page */
.viewport { flex: none; height: 635px; display: flex; justify-content: space-between; overflow: hidden; }
.form { width: 831px; margin-left: 259px; border: solid #dcdddf; border-width: 0 1px; }
.row {
  height: 121px;
  padding: 40px 36px 32px;
  display: grid;
  grid-template-columns: 177px 580px;
  align-items: center;
  border-bottom: 1px solid #c8c9ca;
}
.row.stub { height: 18px; padding: 0; }
.row.email { height: 113px; padding-top: 32px; }
.row.message { height: 150px; padding-top: 32px; border: 0; }
label { font-size: 15px; font-weight: 400; letter-spacing: .18px; margin-top: 2px; -webkit-text-stroke: .2px #212529; }
label.wide { letter-spacing: .45px; }
.field {
  position: relative;
  display: flex;
  align-items: center;
  height: 48px;
  padding: 0 16px 0 17px;
  border: 1px solid #ced4da;
  border-radius: 4px;
  font-size: 19.5px;
  font-weight: 300;
  letter-spacing: .1px;
  -webkit-text-stroke: .3px;
}
.date { padding-left: 16px; }
.date span { white-space: nowrap; letter-spacing: -.05px; }
.date span:nth-child(1) { width: 107px; }
.date span:nth-child(2) { width: 57px; }
.date i { font-style: normal; color: #757575; }
.date svg { width: 22px; height: 24px; margin-left: auto; margin-right: 4px; margin-top: -1px; }
.focused { border-color: #86b7fe; box-shadow: 0 0 0 4px #c2dbfe; }
.misspelt {
  letter-spacing: -.06px;
  text-decoration: underline wavy #e22 1px;
  text-decoration-skip-ink: none;
  text-underline-offset: 1px;
}
.caret { width: 1px; height: 27px; background: #111; margin-top: -2px; }
.field.area { height: 86px; align-items: flex-start; padding: 7px 13px; font-size: 15.5px; }
.area svg { position: absolute; right: 1px; bottom: 1px; width: 10px; height: 10px; }

.dialog {
  position: absolute;
  top: 47px;
  left: -1px;
  z-index: 1;
  width: 578px;
  height: 144px;
  padding: 16px 26px 0 25px;
  background: #fff;
  box-shadow: 0 2px 4px rgba(0, 0, 0, .4);
  font-family: Roboto, sans-serif;
  letter-spacing: 0;
  -webkit-text-stroke: 0;
}
.brand { font: 500 17.5px/22px Lato, sans-serif; color: #686b70; letter-spacing: -.45px; height: 24px; }
.dialog p { margin: 16px 0 0; font-size: 14px; font-weight: 500; line-height: 18px; letter-spacing: .02px; }
.dialog footer { display: flex; align-items: center; justify-content: space-between; margin-top: 18px; }
.dialog a { margin: 1px 0 0 1px; font-size: 12px; font-weight: 400; letter-spacing: .08px; color: #757575; text-decoration: underline; }
.ok {
  width: 68px;
  height: 36px;
  line-height: 34px;
  text-align: center;
  font-size: 14px;
  font-weight: 400;
  color: #3367d6;
  border: 1px solid #dadce0;
  border-radius: 3px;
}

.scrollbar { width: 17px; display: flex; flex-direction: column; align-items: center; background: #f0f0f0; }
.scrollbar svg { width: 17px; height: 17px; }
.thumb { width: 13px; height: 360px; margin: 91px 0 auto; background: #c1c1c1; }

/* Taskbar */
.taskbar {
  flex: none;
  height: 30px;
  display: flex;
  background: linear-gradient(90deg, #e4dbdc 0, #ebe8e8 150px, #ebebeb 260px, #ebebeb 1180px, #e7dbde 1366px);
}
.system { flex: none; display: flex; align-items: center; width: 146px; padding-left: 9px; gap: 18px; }
.system svg { width: 18px; height: 18px; }
.apps { flex: none; display: grid; grid-template-columns: repeat(14, 37px); padding-left: 1px; }
.apps div { display: flex; justify-content: center; align-items: center; padding-right: 2px; }
.apps svg { width: 18px; height: 18px; }
.apps .current { background: #fbfbfb; border-bottom: 2px solid #2eabc7; padding: 2px 0 0; margin-right: 1px; }
.open { background: linear-gradient(#2eabc7, #2eabc7) 4px 100% / 28px 2px no-repeat; }
.open.multi { background: linear-gradient(90deg, #2eabc7 20px, #7fcbdc 20px) 4px 100% / 28px 2px no-repeat; }
.tray { flex: 1; display: grid; grid-template-columns: 47px 29px 38px 67px 24px 24px 25px 22px 26px 25px 39px 65px 35px 5px; align-items: center; padding-left: 230px; color: #1d1d1d; white-space: nowrap; }
.tray svg { width: 16px; height: 16px; }
.tray .people { margin-top: -2px; }
.tray .weather { width: 20px; height: 18px; }
.tray .sound { width: 18px; }
.tray .dropbox { margin-left: -1px; }
.temp, .rain { font-size: 14px; letter-spacing: -.3px; padding-top: 1px; }
.lang, .clock { font-size: 12px; letter-spacing: -.4px; }
.peek { height: 30px; border-left: 1px solid #b9aeb1; }
```
